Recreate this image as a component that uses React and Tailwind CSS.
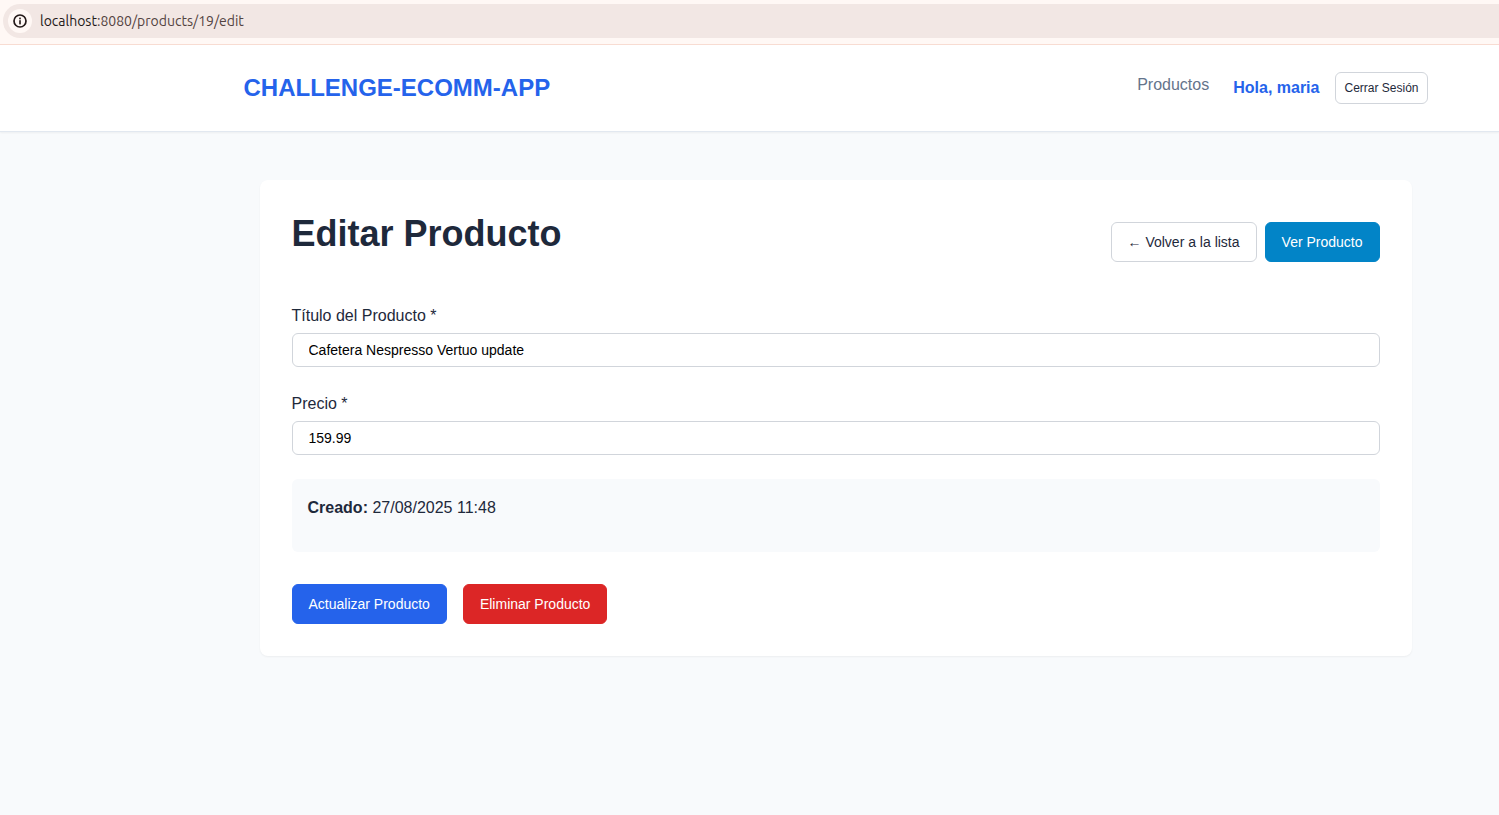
const SANS = "font-['Liberation_Sans',Arial,sans-serif]";

function InfoIcon() {
  return (
    <svg width="16" height="16" viewBox="0 0 16 16" fill="none" aria-hidden="true">
      <circle cx="8" cy="8" r="6" stroke="#231918" strokeWidth="1.7" />
      <rect x="7.2" y="4.6" width="1.6" height="1.7" fill="#231918" />
      <rect x="7.2" y="7.2" width="1.6" height="4.2" fill="#231918" />
    </svg>
  );
}

function AddressBar() {
  return (
    <div className="border-b border-[#f8dcd2] bg-[#fff8f5] pt-1 pb-1.5 pl-[3px]">
      <div className="flex h-[34px] items-center gap-2 rounded-l-full bg-[#f2e7e4] pl-[5px]">
        <button
          type="button"
          aria-label="Información del sitio"
          className="flex size-6 items-center justify-center rounded-full bg-[#fff8f5]"
        >
          <InfoIcon />
        </button>
        <span className="font-[Ubuntu,'Noto_Sans',sans-serif] text-sm text-[#534341]">
          <span className="text-[#231918]">localhost</span>:8080/products/19/edit
        </span>
      </div>
    </div>
  );
}

function SiteHeader() {
  return (
    <header className="border-b border-[#e2e8f0] bg-white py-6 pl-[172px] shadow-xs">
      <div className="mx-auto flex h-[38px] max-w-[1216px] items-center justify-between px-4">
        <a href="#" className="text-2xl font-bold text-[#2563eb]">
          CHALLENGE-ECOMM-APP
        </a>
        <nav className="flex items-center gap-6">
          <a href="#" className="pb-1.5 text-base text-[#64748b]">
            Productos
          </a>
          <div className="flex items-center gap-4">
            <span className="text-base font-bold text-[#2563eb]">Hola, maria</span>
            <button
              type="button"
              className="h-8 rounded-md border border-[#d1d5db] bg-white px-2 text-xs"
            >
              Cerrar Sesión
            </button>
          </div>
        </nav>
      </div>
    </header>
  );
}

function Field({ id, label, ...props }) {
  return (
    <div className="flex flex-col gap-1">
      <label htmlFor={id} className="text-base leading-[26px]">
        {label}
      </label>
      <input
        id={id}
        className="h-[34px] w-full rounded-md border border-[#d1d5db] bg-white px-4 text-sm text-black"
        {...props}
      />
    </div>
  );
}

export default function App() {
  return (
    <div className={`min-h-screen bg-[#f8fafc] text-[#1e293b] ${SANS}`}>
      <AddressBar />
      <SiteHeader />
      <main className="pt-12 pb-12 pl-[172px]">
        <div className="mx-auto max-w-[1216px] px-8">
          <section className="rounded-lg bg-white p-8 shadow-xs">
            <div className="mb-8 flex items-center justify-between">
              <h1 className="mb-4 text-4xl leading-[43px] font-bold">Editar Producto</h1>
              <div className="flex gap-2">
                <a
                  href="#"
                  className="flex h-10 items-center rounded-md border border-[#d1d5db] px-4 text-sm"
                >
                  ← Volver a la lista
                </a>
                <a
                  href="#"
                  className="flex h-10 items-center rounded-md border border-[#0284c7] bg-[#0284c7] px-4 text-sm text-white"
                >
                  Ver Producto
                </a>
              </div>
            </div>
            <form className="flex flex-col gap-6" onSubmit={(e) => e.preventDefault()}>
              <Field
                id="title"
                label="Título del Producto *"
                type="text"
                defaultValue="Cafetera Nespresso Vertuo update"
              />
              <Field
                id="price"
                label="Precio *"
                type="text"
                inputMode="decimal"
                defaultValue="159.99"
              />
              <div className="rounded-md bg-[#f8fafc] p-4">
                <p className="mb-4 text-base leading-[25px]">
                  <strong>Creado:</strong> 27/08/2025 11:48
                </p>
              </div>
              <div className="mt-2 flex gap-4">
                <button
                  type="submit"
                  className="h-10 rounded-md border border-[#2563eb] bg-[#2563eb] px-4 text-sm text-white"
                >
                  Actualizar Producto
                </button>
                <button
                  type="button"
                  className="h-10 rounded-md border border-[#dc2626] bg-[#dc2626] px-4 text-sm text-white"
                >
                  Eliminar Producto
                </button>
              </div>
            </form>
          </section>
        </div>
      </main>
    </div>
  );
}
